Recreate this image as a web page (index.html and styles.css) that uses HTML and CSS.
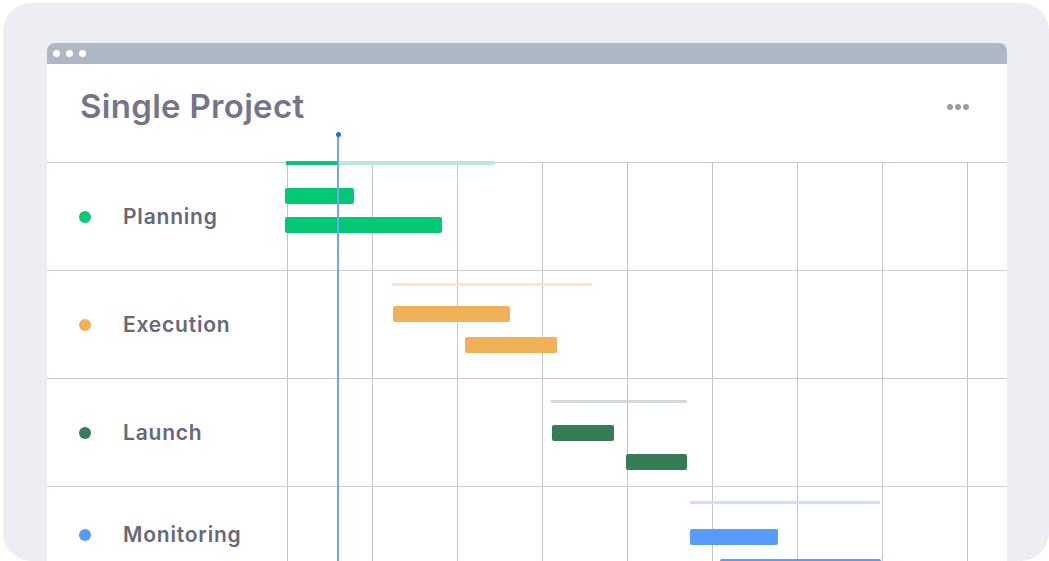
FILE: index.html
```html
<!DOCTYPE html>
<html lang="en">
<head>
    <meta charset="UTF-8">
    <meta name="viewport" content="width=device-width, initial-scale=1.0">
    <title>Single Project</title>
    <link rel="stylesheet" href="styles.css">
</head>
<body>
    <div class="frame">
        <div class="window">
            <div class="titlebar">
                <span class="titlebar-dot"></span>
                <span class="titlebar-dot"></span>
                <span class="titlebar-dot"></span>
            </div>
            <div class="board">
                <div class="board-header">
                    <h1>Single Project</h1>
                    <div class="more">
                        <span></span><span></span><span></span>
                    </div>
                </div>

                <div class="today"></div>

                <div class="row">
                    <div class="label"><span class="bullet green"></span>Planning</div>
                    <div class="timeline">
                        <div class="summary green-light" style="left: -1px; top: -2px; width: 209px; height: 4px;">
                            <div class="progress green" style="width: 52px;"></div>
                        </div>
                        <div class="bar green" style="left: -2px; top: 25px; width: 69px;"></div>
                        <div class="bar green" style="left: -2px; top: 54px; width: 157px;"></div>
                    </div>
                </div>

                <div class="row">
                    <div class="label"><span class="bullet orange"></span>Execution</div>
                    <div class="timeline">
                        <div class="summary orange-light" style="left: 105px; top: 12px; width: 200px;"></div>
                        <div class="bar orange" style="left: 106px; top: 35px; width: 117px;"></div>
                        <div class="bar orange" style="left: 178px; top: 66px; width: 92px;"></div>
                    </div>
                </div>

                <div class="row">
                    <div class="label"><span class="bullet dark"></span>Launch</div>
                    <div class="timeline">
                        <div class="summary dark-light" style="left: 264px; top: 21px; width: 136px;"></div>
                        <div class="bar dark" style="left: 265px; top: 46px; width: 62px;"></div>
                        <div class="bar dark" style="left: 339px; top: 75px; width: 61px;"></div>
                    </div>
                </div>

                <div class="row row-last">
                    <div class="label"><span class="bullet blue"></span>Monitoring</div>
                    <div class="timeline">
                        <div class="summary blue-light" style="left: 403px; top: 14px; width: 190px;"></div>
                        <div class="bar blue" style="left: 403px; top: 42px; width: 88px;"></div>
                        <div class="bar blue" style="left: 433px; top: 72px; width: 161px;"></div>
                    </div>
                </div>
            </div>
        </div>
    </div>
</body>
</html>
```

FILE: styles.css
```css
body {
    margin: 0;
    background-color: #ffffff;
    font-family: Inter, "Open Sans", sans-serif;
}

.frame {
    margin: 3px 0 0 3px;
    width: 1046px;
    height: 558px;
    padding: 40px 0 0 44px;
    box-sizing: border-box;
    background-color: #edeef4;
    border-radius: 28px;
    overflow: hidden;
}

.window {
    width: 960px;
    background-color: #ffffff;
    border-radius: 8px 8px 0 0;
}

.titlebar {
    display: flex;
    align-items: center;
    gap: 6px;
    height: 21px;
    padding-left: 6px;
    background-color: #adb8c4;
    border-radius: 8px 8px 0 0;
}

.titlebar-dot {
    width: 7px;
    height: 7px;
    border-radius: 50%;
    background-color: #ffffff;
}

.board {
    position: relative;
}

.board-header {
    display: flex;
    align-items: center;
    justify-content: space-between;
    height: 98px;
    padding: 0 38px 0 33px;
    box-sizing: border-box;
}

.board-header h1 {
    margin: 0 0 14px 0;
    font-size: 33px;
    font-weight: 600;
    color: #75758a;
    letter-spacing: 0.3px;
}

.more {
    display: flex;
    gap: 2px;
    margin-bottom: 12px;
}

.more span {
    width: 6px;
    height: 6px;
    border-radius: 50%;
    background-color: #9b9bab;
}

.today {
    position: absolute;
    left: 290px;
    top: 69px;
    bottom: 0;
    width: 2px;
    background-color: #6aa9f4;
    z-index: 2;
}

.today::before {
    content: "";
    position: absolute;
    left: -1.5px;
    top: -1px;
    width: 5px;
    height: 5px;
    border-radius: 50%;
    background-color: #1b6ee6;
}

.row {
    display: grid;
    grid-template-columns: 240px 1fr;
    height: 108px;
    border-top: 1px solid #cacad3;
    box-sizing: border-box;
}

.row-last {
    height: 96px;
}

.label {
    display: flex;
    align-items: center;
    gap: 32px;
    padding-left: 32px;
    font-size: 21px;
    font-weight: 600;
    color: #676879;
    letter-spacing: 0.8px;
}

.bullet {
    width: 12px;
    height: 12px;
    border-radius: 50%;
}

.timeline {
    position: relative;
    background-image: linear-gradient(to right, #c3c3ca 1px, transparent 1px);
    background-size: 85px 100%;
}

.bar {
    position: absolute;
    height: 16px;
    border-radius: 2px;
}

.summary {
    position: absolute;
    height: 3px;
}

.progress {
    height: 100%;
}

.green { background-color: #00c875; }
.green-light { background-color: #b5ecd3; }
.orange { background-color: #f2b057; }
.orange-light { background-color: #fbe5cb; }
.dark { background-color: #367c55; }
.dark-light { background-color: #d5dad8; }
.blue { background-color: #579bfc; }
.blue-light { background-color: #cde1fc; }
```
